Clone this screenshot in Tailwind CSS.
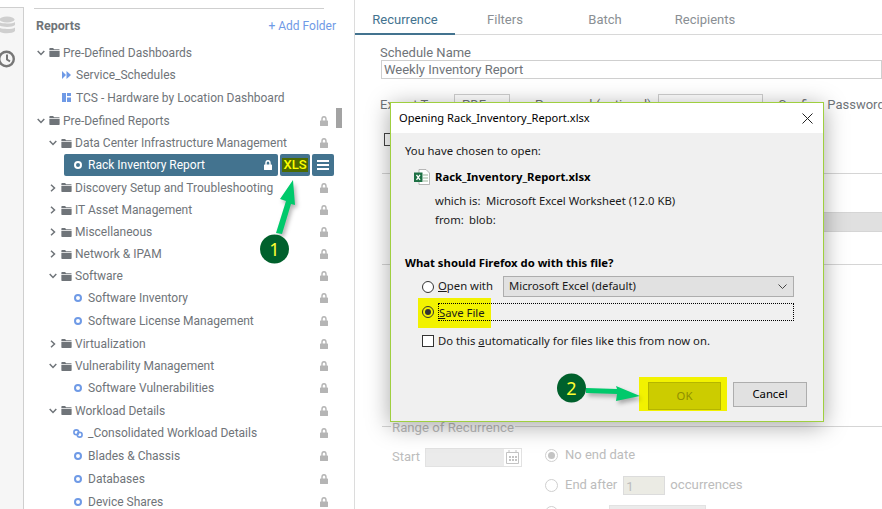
<!DOCTYPE html>
<html lang="en">

<head>
    <meta charset="UTF-8">
    <meta name="viewport" content="width=device-width, initial-scale=1.0">
    <title>Reports - Schedule</title>
    <script src="https://cdn.jsdelivr.net/npm/@tailwindcss/browser@4"></script>
</head>

<body class="bg-white">
    <!-- shared icons -->
    <svg class="hidden">
        <symbol id="lock" viewBox="0 0 8 10"><path fill="none" stroke="currentColor" stroke-width="1.400" d="M2 5V3c0-1.400.8-2.200 2-2.200S6 1.600 6 3v2"/><path fill="currentColor" d="M.6 4.400h6.800c.3 0 .6.300.6.600v4.400c0 .3-.3.600-.6.600H.6c-.3 0-.6-.3-.6-.6V5c0-.3.300-.6.600-.6z"/></symbol>
        <symbol id="folder" viewBox="0 0 12 10"><path fill="currentColor" d="M1 0h3.500l1 1.300H11c.4 0 .7.300.7.700v.6H.3V.7C.3.300.6 0 1 0zM.3 3.400h11.400v5.900c0 .4-.3.700-.7.700H1c-.4 0-.7-.3-.7-.7z"/></symbol>
        <symbol id="down" viewBox="0 0 8 6"><path fill="none" stroke="currentColor" stroke-width="1.500" d="M.7 1l3.300 3.500L7.300 1"/></symbol>
        <symbol id="right" viewBox="0 0 6 8"><path fill="none" stroke="currentColor" stroke-width="1.500" d="M1 .7l3.500 3.300L1 7.300"/></symbol>
        <symbol id="ring" viewBox="0 0 8 8"><circle cx="4" cy="4" r="3" fill="none" stroke="currentColor" stroke-width="2"/></symbol>
    </svg>

    <div class="relative w-[882px] h-[509px] overflow-hidden flex font-['Roboto',sans-serif] text-[#6f7479]">

        <!-- left rail -->
        <div class="w-[24px] shrink-0 bg-[#f6f6f6] border-r border-[#cfcfcf] mt-[7px] border-t flex flex-col items-start">
            <svg class="mt-[8px] w-[15px] h-[19px] text-[#cfcfcf]" viewBox="0 0 15 19">
                <ellipse cx="7" cy="3.500" rx="7.500" ry="3" fill="currentColor" />
                <path fill="currentColor" d="M-1 6c2 2 14 2 16 0v3c-2 2.500-14 2.500-16 0zM-1 11.500c2 2 14 2 16 0v3.500c-2 3-14 3-16 0z" />
            </svg>
            <svg class="mt-[15px] w-[16px] h-[18px] text-[#777]" viewBox="0 0 16 18">
                <circle cx="6.500" cy="9" r="7.300" fill="none" stroke="currentColor" stroke-width="2.400" />
                <path fill="none" stroke="currentColor" stroke-width="2" d="M7 4.500v5l3 1.800" />
            </svg>
        </div>

        <!-- reports tree -->
        <div class="relative w-[331px] shrink-0 border-r border-[#dcdcdc] text-[12px]">
            <div class="ml-[10px] mt-[8px] w-[290px] border-t border-[#cfcfcf]"></div>
            <div class="flex items-center justify-between ml-[12px] w-[300px] h-[24px] mt-[5px]">
                <span class="font-bold text-[12.500px] text-[#6f7479]">Reports</span>
                <span class="text-[#6f9ae6]">+ Add Folder</span>
            </div>

            <div class="mt-[4px]">
                <div class="h-[21px] flex items-center pl-[13px] pr-[26px]"><svg class="w-[8px] h-[6px] mr-[4px]"><use href="#down" /></svg><svg class="w-[11px] h-[9px] mr-[3px]"><use href="#folder" /></svg><span>Pre-Defined Dashboards</span></div>
                <div class="h-[23px] flex items-center pl-[38px]">
                    <svg class="w-[9px] h-[8px] mr-[5px] text-[#6f9ae6]" viewBox="0 0 9 8"><path fill="currentColor" d="M0 0l4 4-4 4zM4.500 0l4.500 4-4.500 4z" /></svg><span>Service_Schedules</span>
                </div>
                <div class="h-[23px] flex items-center pl-[38px]">
                    <svg class="w-[9px] h-[9px] mr-[5px] text-[#6f9ae6]" viewBox="0 0 9 9"><path fill="currentColor" d="M0 0h4v9H0zM5 0h4v3H5zM5 4.500h4V9H5z" /></svg><span>TCS - Hardware by Location Dashboard</span>
                </div>
                <div class="h-[23px] flex items-center pl-[13px] pr-[26px]"><svg class="w-[8px] h-[6px] mr-[4px]"><use href="#down" /></svg><svg class="w-[11px] h-[9px] mr-[3px]"><use href="#folder" /></svg><span>Pre-Defined Reports</span><svg class="w-[8px] h-[10px] ml-auto text-[#b5b5b5]"><use href="#lock" /></svg></div>
                <div class="h-[22px] flex items-center pl-[25px] pr-[26px]"><svg class="w-[8px] h-[6px] mr-[4px]"><use href="#down" /></svg><svg class="w-[11px] h-[9px] mr-[3px]"><use href="#folder" /></svg><span>Data Center Infrastructure Management</span><svg class="w-[8px] h-[10px] ml-auto text-[#b5b5b5]"><use href="#lock" /></svg></div>

                <!-- selected row -->
                <div class="h-[22px] flex pl-[40px] gap-[2px] text-white">
                    <div class="w-[214px] flex items-center bg-[#43738f] rounded-[2px] pl-[10px] pr-[6px]">
                        <svg class="w-[8px] h-[8px] mr-[6px]"><use href="#ring" /></svg><span>Rack Inventory Report</span><svg class="w-[8px] h-[10px] ml-auto"><use href="#lock" /></svg>
                    </div>
                    <div class="w-[30px] flex items-center justify-center bg-[#43738f] rounded-[2px]">
                        <span class="bg-[#4d6b00] text-[#ffff00] font-medium text-[13px] leading-[14px] px-[1px]">XLS</span>
                    </div>
                    <div class="w-[22px] flex items-center justify-center bg-[#43738f] rounded-[2px]">
                        <svg class="w-[12px] h-[10px]" viewBox="0 0 12 10"><path fill="currentColor" d="M0 0h12v2H0zM0 4h12v2H0zM0 8h12v2H0z" /></svg>
                    </div>
                </div>

                <div class="h-[23px] flex items-center pl-[26px] pr-[26px]"><svg class="w-[6px] h-[8px] mr-[5px]"><use href="#right" /></svg><svg class="w-[11px] h-[9px] mr-[3px]"><use href="#folder" /></svg><span>Discovery Setup and Troubleshooting</span><svg class="w-[8px] h-[10px] ml-auto text-[#b5b5b5]"><use href="#lock" /></svg></div>
                <div class="h-[22px] flex items-center pl-[26px] pr-[26px]"><svg class="w-[6px] h-[8px] mr-[5px]"><use href="#right" /></svg><svg class="w-[11px] h-[9px] mr-[3px]"><use href="#folder" /></svg><span>IT Asset Management</span><svg class="w-[8px] h-[10px] ml-auto text-[#b5b5b5]"><use href="#lock" /></svg></div>
                <div class="h-[22px] flex items-center pl-[26px] pr-[26px]"><svg class="w-[6px] h-[8px] mr-[5px]"><use href="#right" /></svg><svg class="w-[11px] h-[9px] mr-[3px]"><use href="#folder" /></svg><span>Miscellaneous</span><svg class="w-[8px] h-[10px] ml-auto text-[#b5b5b5]"><use href="#lock" /></svg></div>
                <div class="h-[22px] flex items-center pl-[26px] pr-[26px]"><svg class="w-[6px] h-[8px] mr-[5px]"><use href="#right" /></svg><svg class="w-[11px] h-[9px] mr-[3px]"><use href="#folder" /></svg><span>Network &amp; IPAM</span><svg class="w-[8px] h-[10px] ml-auto text-[#b5b5b5]"><use href="#lock" /></svg></div>
                <div class="h-[22px] flex items-center pl-[25px] pr-[26px]"><svg class="w-[8px] h-[6px] mr-[4px]"><use href="#down" /></svg><svg class="w-[11px] h-[9px] mr-[3px]"><use href="#folder" /></svg><span>Software</span><svg class="w-[8px] h-[10px] ml-auto text-[#b5b5b5]"><use href="#lock" /></svg></div>
                <div class="h-[22px] flex items-center pl-[50px] pr-[26px]"><svg class="w-[8px] h-[8px] mr-[6px] text-[#6f9ae6]"><use href="#ring" /></svg><span>Software Inventory</span><svg class="w-[8px] h-[10px] ml-auto text-[#b5b5b5]"><use href="#lock" /></svg></div>
                <div class="h-[23px] flex items-center pl-[50px] pr-[26px]"><svg class="w-[8px] h-[8px] mr-[6px] text-[#6f9ae6]"><use href="#ring" /></svg><span>Software License Management</span><svg class="w-[8px] h-[10px] ml-auto text-[#b5b5b5]"><use href="#lock" /></svg></div>
                <div class="h-[23px] flex items-center pl-[26px] pr-[26px]"><svg class="w-[6px] h-[8px] mr-[5px]"><use href="#right" /></svg><svg class="w-[11px] h-[9px] mr-[3px]"><use href="#folder" /></svg><span>Virtualization</span><svg class="w-[8px] h-[10px] ml-auto text-[#b5b5b5]"><use href="#lock" /></svg></div>
                <div class="h-[22px] flex items-center pl-[25px] pr-[26px]"><svg class="w-[8px] h-[6px] mr-[4px]"><use href="#down" /></svg><svg class="w-[11px] h-[9px] mr-[3px]"><use href="#folder" /></svg><span>Vulnerability Management</span><svg class="w-[8px] h-[10px] ml-auto text-[#b5b5b5]"><use href="#lock" /></svg></div>
                <div class="h-[22px] flex items-center pl-[50px] pr-[26px]"><svg class="w-[8px] h-[8px] mr-[6px] text-[#6f9ae6]"><use href="#ring" /></svg><span>Software Vulnerabilities</span><svg class="w-[8px] h-[10px] ml-auto text-[#b5b5b5]"><use href="#lock" /></svg></div>
                <div class="h-[23px] flex items-center pl-[25px] pr-[26px]"><svg class="w-[8px] h-[6px] mr-[4px]"><use href="#down" /></svg><svg class="w-[11px] h-[9px] mr-[3px]"><use href="#folder" /></svg><span>Workload Details</span><svg class="w-[8px] h-[10px] ml-auto text-[#b5b5b5]"><use href="#lock" /></svg></div>
                <div class="h-[22px] flex items-center pl-[49px] pr-[26px]"><svg class="w-[10px] h-[9px] mr-[5px] text-[#6f9ae6]" viewBox="0 0 10 9"><circle cx="3.300" cy="3.300" r="2.400" fill="none" stroke="currentColor" stroke-width="1.600" /><circle cx="6.700" cy="5.700" r="2.400" fill="none" stroke="currentColor" stroke-width="1.600" /></svg><span>_Consolidated Workload Details</span><svg class="w-[8px] h-[10px] ml-auto text-[#b5b5b5]"><use href="#lock" /></svg></div>
                <div class="h-[23px] flex items-center pl-[50px] pr-[26px]"><svg class="w-[8px] h-[8px] mr-[6px] text-[#6f9ae6]"><use href="#ring" /></svg><span>Blades &amp; Chassis</span><svg class="w-[8px] h-[10px] ml-auto text-[#b5b5b5]"><use href="#lock" /></svg></div>
                <div class="h-[23px] flex items-center pl-[50px] pr-[26px]"><svg class="w-[8px] h-[8px] mr-[6px] text-[#6f9ae6]"><use href="#ring" /></svg><span>Databases</span><svg class="w-[8px] h-[10px] ml-auto text-[#b5b5b5]"><use href="#lock" /></svg></div>
                <div class="h-[23px] flex items-center pl-[50px] pr-[26px]"><svg class="w-[8px] h-[8px] mr-[6px] text-[#6f9ae6]"><use href="#ring" /></svg><span>Device Shares</span><svg class="w-[8px] h-[10px] ml-auto text-[#b5b5b5]"><use href="#lock" /></svg></div>
            </div>

            <!-- scrollbar thumb -->
            <div class="absolute left-[312px] top-[108px] w-[6px] h-[20px] bg-[#a3a3a3]"></div>
        </div>

        <!-- schedule form -->
        <div class="flex-1 min-w-0 text-[13px]">
            <div class="flex h-[35px] border-b border-[#d8d8d8]">
                <div class="w-[100px] -mb-px border-b-2 border-[#43738f] text-[#43738f] text-center leading-[40px]">Recurrence</div>
                <div class="w-[100px] text-center leading-[40px] text-[#8a8f94]">Filters</div>
                <div class="w-[100px] text-center leading-[40px] text-[#8a8f94]">Batch</div>
                <div class="w-[100px] text-center leading-[40px] text-[#8a8f94]">Recipients</div>
            </div>
            <div class="pl-[25px]">
                <div class="mt-[10px] h-[15px] leading-[16px]">Schedule Name</div>
                <div class="ml-[1px] h-[19px] border border-[#cfcfcf] pl-[2px] leading-[17px]">Weekly Inventory Report</div>
                <div class="flex items-start mt-[15px] h-[22px]">
                    <span class="shrink-0 w-[74px] leading-[22px]">Export Type</span>
                    <span class="shrink-0 w-[56px] h-[22px] border border-[#cfcfcf] pl-[7px] leading-[20px]">PDF</span>
                    <span class="shrink-0 ml-[25px] w-[123px] leading-[22px]">Password (optional)</span>
                    <span class="shrink-0 w-[105px] h-[22px] border border-[#cfcfcf]"></span>
                    <span class="shrink-0 ml-[15px] whitespace-nowrap leading-[22px]">Confirm Password</span>
                </div>
                <div class="ml-[4px] mt-[17px] w-[12px] h-[13px] border border-[#444]"></div>
                <div class="ml-[2px] mt-[27px] border-t border-[#d5d5d5]"></div>
                <div class="ml-[300px] mt-[38px] h-[20px] bg-[#e0e0e0] border-y border-[#d5d5d5]"></div>
                <div class="ml-[2px] mt-[32px] border-t border-[#d5d5d5]"></div>

                <!-- range of recurrence, disabled -->
                <div class="ml-[2px] mt-[161px] border-t border-[#d5d5d5] text-[#bcbcbc]">
                    <span class="block w-fit ml-[9px] -mt-[7px] px-[1px] bg-white leading-[16px] text-[13.200px]">Range of Recurrence</span>
                    <div class="relative flex items-start mt-[1px] ml-[10px]">
                        <span class="w-[33px] leading-[40px]">Start</span>
                        <div class="mt-[11px] w-[97px] h-[19px] border border-[#e2e2e2] bg-[#ebebeb] flex justify-end">
                            <svg class="w-[17px] h-[17px] bg-white" viewBox="0 0 17 17"><path fill="none" stroke="#c4c4c4" d="M2.500 3.500h12v11h-12zM5 1v3M12 1v3" /><path fill="#c4c4c4" d="M5 7h2v2H5zM8 7h2v2H8zM11 7h2v2h-2zM5 10h2v2H5zM8 10h2v2H8zM11 10h2v2h-2z" /></svg>
                        </div>
                        <div class="ml-[23px] mt-[8px] flex flex-col">
                            <div class="flex items-center h-[20px]"><span class="w-[13px] h-[13px] rounded-full border border-[#cfcfcf] flex items-center justify-center"><span class="w-[7px] h-[7px] rounded-full bg-[#c4c4c4]"></span></span><span class="ml-[7px]">No end date</span></div>
                            <div class="flex items-center h-[20px] mt-[10px]"><span class="w-[13px] h-[13px] rounded-full border border-[#cfcfcf]"></span><span class="ml-[7px]">End after</span><span class="ml-[6px] w-[42px] h-[19px] bg-[#ebebe4] border border-[#dcdcdc] pl-[2px] leading-[20px]">1</span><span class="ml-[5px] text-[13.200px]">occurrences</span></div>
                            <div class="flex items-start h-[20px] mt-[10px]"><span class="w-[13px] h-[13px] rounded-full border border-[#cfcfcf] mt-[1px]"></span><span class="ml-[51px] w-[97px] h-[19px] bg-[#ebebeb] border border-[#e2e2e2]"></span></div>
                        </div>
                    </div>
                </div>
            </div>
        </div>

        <!-- file download dialog -->
        <div class="absolute left-[390px] top-[102px] w-[434px] h-[320px] border border-[#9fcf3f] bg-[#f0f0f0] shadow-[0_4px_22px_rgba(0,0,0,0.35)] font-['Noto_Sans',sans-serif] text-[11.300px] text-[#1a1a1a] z-10">
            <div class="h-[30px] bg-white flex items-center justify-between pl-[8px] pr-[10px] text-[11.100px] text-black">
                <span class="pt-[1px]">Opening Rack_Inventory_Report.xlsx</span>
                <svg class="w-[11px] h-[11px]" viewBox="0 0 11 11"><path fill="none" stroke="#222" d="M.5.500l10 10M10.500.500l-10 10" /></svg>
            </div>
            <div class="pl-[14px]">
                <div class="mt-[10px] leading-[16px]">You have chosen to open:</div>
                <div class="flex items-center mt-[9px] h-[18px] ml-[9px]">
                    <svg class="w-[16px] h-[16px] mr-[5px]" viewBox="0 0 16 16">
                        <path fill="#fff" stroke="#a5a5a5" stroke-width=".8" d="M5 .500h7l3.500 3.500v11.500H5z" />
                        <path fill="none" stroke="#9bb59b" d="M9 6h5M9 9h5M9 12h5" />
                        <path fill="#1d7044" d="M0 3.500h8.500v9.500H0z" />
                        <path fill="none" stroke="#fff" stroke-width="1.300" d="M2.500 5.800l3.500 5M6 5.800l-3.500 5" />
                    </svg>
                    <span class="font-bold text-black">Rack_Inventory_Report.xlsx</span>
                </div>
                <div class="flex mt-[5px] ml-[30px] leading-[19px]">
                    <span class="w-[51px]">which is:</span><span>Microsoft Excel Worksheet (12.0 KB)</span>
                </div>
                <div class="flex ml-[30px] leading-[19px]">
                    <span class="w-[34px]">from:</span><span>blob:</span>
                </div>
                <div class="mt-[26px] font-bold text-black leading-[16px]">What should Firefox do with this file?</div>

                <div class="mt-[5px] ml-[17px] flex items-center h-[21px]">
                    <span class="w-[12px] h-[12px] rounded-full border border-[#333] bg-white"></span>
                    <span class="ml-[4px] w-[65px]"><u>O</u>pen with</span>
                    <div class="w-[291px] h-[21px] bg-[#e1e1e1] border border-[#adadad] flex items-center justify-between pl-[5px] pr-[6px]">
                        <span>Microsoft Excel (default)</span>
                        <svg class="w-[9px] h-[5px]" viewBox="0 0 9 5"><path fill="none" stroke="#444" d="M.5.500l4 4 4-4" /></svg>
                    </div>
                </div>
                <div class="relative mt-[6px] ml-[17px] flex items-center h-[18px]">
                    <div class="absolute -left-[4px] -top-[5px] w-[73px] h-[30px] bg-[#f2f200]"></div>
                    <span class="relative w-[12px] h-[12px] rounded-full border border-[#333] bg-[#f2f200] flex items-center justify-center"><span class="w-[6px] h-[6px] rounded-full bg-[#333]"></span></span>
                    <span class="relative ml-[4px] h-[18px] w-[356px] border border-dotted border-black leading-[18px] -mr-[1px]"><u>S</u>ave File</span>
                </div>
                <div class="mt-[13px] ml-[17px] flex items-center h-[14px]">
                    <span class="w-[12px] h-[12px] border border-[#333] bg-white"></span>
                    <span class="ml-[4px]">Do this <u>a</u>utomatically for files like this from now on.</span>
                </div>
                <div class="flex items-start justify-end mt-[34px] mr-[16px] gap-[12px]">
                    <div class="relative w-[73px] h-[28px]">
                        <div class="absolute -left-[9px] -top-[5px] w-[88px] h-[34px] bg-[#f2f200]"></div>
                        <div class="relative h-full border border-[#b5b500] bg-[#cccc00] text-[#8f8f00] flex items-center justify-center">OK</div>
                    </div>
                    <div class="w-[74px] h-[25px] border border-[#adadad] bg-[#e1e1e1] text-black flex items-center justify-center">Cancel</div>
                </div>
            </div>
        </div>

        <!-- callouts drawn on top of the screenshot -->
        <svg class="absolute left-0 top-0 z-20 pointer-events-none" width="882" height="509" viewBox="0 0 882 509">
            <g fill="#00c96b" class="drop-shadow-[2px_3px_2px_rgba(0,0,0,0.3)]">
                <path d="M293 180L280 199l6 2-10 32 6 1 9-30 4 1z" />
                <path d="M586 388l31 1-1-3 24 10-24 5 1-7-31-1z" />
            </g>
            <circle cx="274.500" cy="249" r="14.500" fill="#00602c" />
            <circle cx="571.500" cy="388" r="14.500" fill="#00602c" />
        </svg>
        <span class="absolute z-30 left-[260px] top-[234px] w-[29px] text-center text-[#ffff33] text-[18px] leading-[30px] font-['Noto_Sans',sans-serif]">1</span>
        <span class="absolute z-30 left-[557px] top-[373px] w-[29px] text-center text-[#ffff33] text-[18px] leading-[30px] font-['Noto_Sans',sans-serif]">2</span>
    </div>
</body>

</html>
